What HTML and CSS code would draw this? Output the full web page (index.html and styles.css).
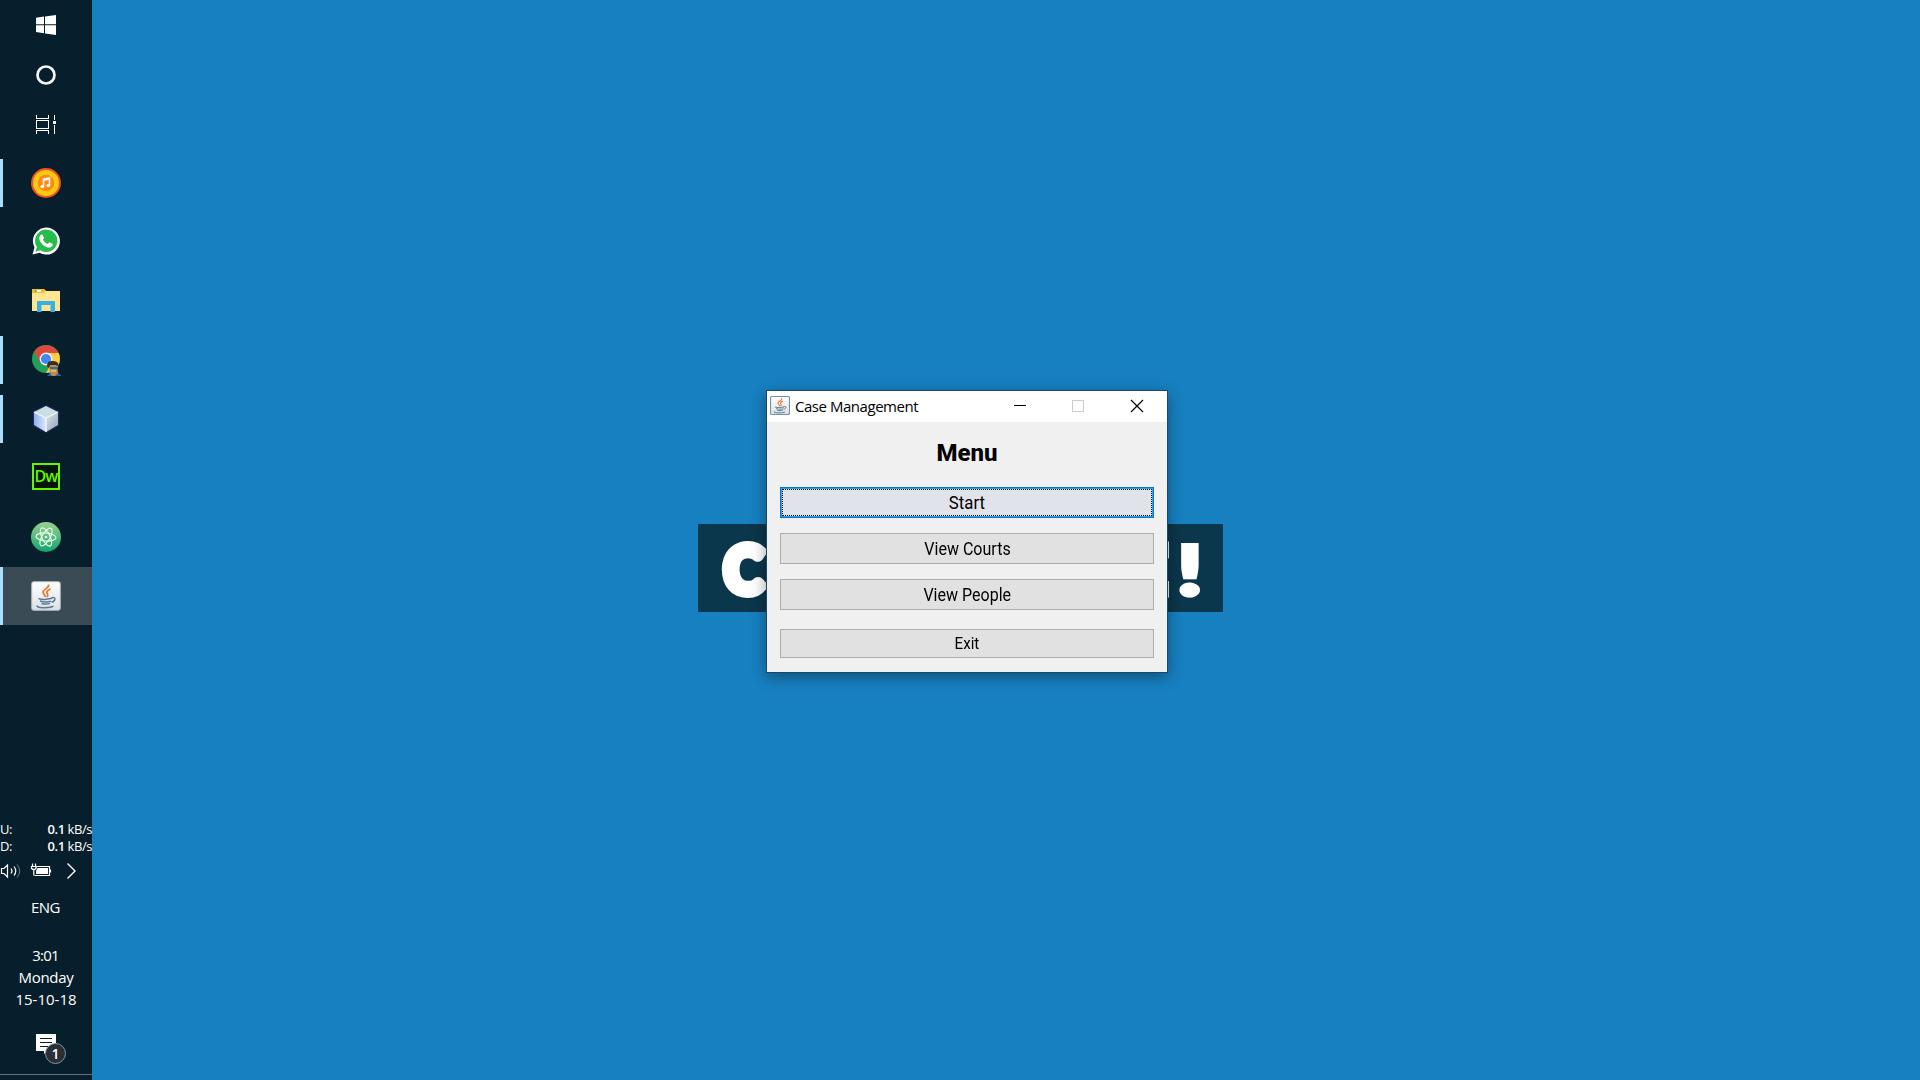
FILE: index.html
```
<!DOCTYPE html>
<html lang="en">
<head>
<meta charset="utf-8">
<title>Case Management</title>
<link rel="stylesheet" href="styles.css">
</head>
<body>
<svg class="defs" aria-hidden="true">
  <defs>
    <linearGradient id="tile" x1="0" y1="0" x2="0" y2="1"><stop offset="0" stop-color="#fff"/><stop offset="1" stop-color="#dcdfe2"/></linearGradient>
    <symbol id="java" viewBox="0 0 30 30">
      <rect x=".7" y=".7" width="28.6" height="28.6" rx="2" fill="url(#tile)" stroke="#a9bccb"/>
      <path d="M17.500 3.500c1.500 4-6 4.500-5.500 8 .4 1.500 2 2.500 2.500 4.500M19.500 8c-3.500 1.500-4.500 3-3 5 .9 1.200.3 2-.5 3" fill="none" stroke="#e8762b" stroke-width="1.700"/>
      <path d="M7.500 17.500c3 1 9 1 13.500-.2M9 20c3.500 1.100 8 1.100 11 .1M10.500 22.500c3 .8 6 .8 8.500-.1M20.500 17c4.500-2 4.500 3 0 4.300M6.500 24.500c-3 2.500 12 3 16 .7" fill="none" stroke="#587b98" stroke-width="1.500"/>
    </symbol>
  </defs>
</svg>
<div class="desktop">
  <nav class="taskbar">
    <div class="system">
      <div class="sys"><svg width="20" height="20" viewBox="0 0 20 20" fill="#fff"><path d="M0 2.700 8 1.500V9.300H0zM9 1.400 20 0V9.300H9zM0 10.300H8v7.900L0 17.100zM9 10.300H20V20L9 18.500z"/></svg></div>
      <div class="sys"><svg width="20" height="20" viewBox="0 0 20 20"><circle cx="10" cy="10" r="8.500" fill="none" stroke="#f4f6f7" stroke-width="2.700"/></svg></div>
      <div class="sys views"><svg width="20" height="19" viewBox="0 0 20 19" fill="none" stroke="#fff" shape-rendering="crispEdges"><path d="M.5 0V3.500H12.500V0M.5 5.500H12.500V13.500H.5zM.5 19V15.500H12.500V19M18.500 0V5M18.500 10V19"/><path d="M17 6H20V9H17z" fill="#fff" stroke="none"/></svg></div>
    </div>
    <div class="apps">
      <div class="app open"><svg width="30" height="30" viewBox="0 0 30 30"><circle cx="15" cy="15" r="15" fill="#f04f23"/><circle cx="15" cy="15" r="13" fill="#ffc814"/><circle cx="15" cy="15" r="8.300" fill="#f98c0b"/><path d="M12.500 18.300V11l6-1.200v7.500" fill="none" stroke="#fff" stroke-width="1.500"/><path d="M12.500 12 18.500 10.800" stroke="#fff" stroke-width="2"/><ellipse cx="11.300" cy="18.500" rx="1.900" ry="1.500" fill="#fff"/><ellipse cx="17.300" cy="17.500" rx="1.900" ry="1.500" fill="#fff"/></svg></div>
      <div class="app whatsapp"><svg width="28" height="28" viewBox="0 0 28 28"><path d="M.5 27.500 2.500 20.500A13.500 13.500 0 1 1 7.500 25.700z" fill="#fff"/><path d="M3.400 24.700 4.900 20A11.200 11.200 0 1 1 8.300 23.300z" fill="#27bd4a"/><path d="M8.500 8.200c1-1.200 2-.9 2.400 0l1 2.400c.2.700-.3 1.300-1 2.100 1 2 2.500 3.300 4.800 4.200.8-1 1.300-1.700 2-1.400l2.600 1.300c.6.300.5 1.200.1 2-.8 1.500-2.700 2.200-4.700 1.600-4-1.200-7.500-4.800-8.300-8.200-.3-1.500.2-3 1.100-4z" fill="#fff"/></svg></div>
      <div class="app folder"><svg width="28" height="23" viewBox="0 0 28 23"><path d="M0 0H12L14 2H28V22H0z" fill="#ffe491"/><path d="M0 0H12L13.500 2 12 4H0z" fill="#f3bd25"/><path d="M3 1H9V3H3z" fill="#fff5d8"/><path d="M3 1H4.500V3H3z" fill="#28a56d"/><path d="M5 23V13Q5 12 6 12H22Q23 12 23 13V23H18.500V16H9.500V23z" fill="#38b0e4"/></svg></div>
      <div class="app open"><svg width="29" height="31" viewBox="0 0 29 31"><circle cx="14" cy="14" r="14" fill="#22a05b"/><path d="M14 14 2 7A14 14 0 0 1 26.500 8z" fill="#dc4a3d"/><path d="M2 7 8 17 14 8z" fill="#dc4a3d"/><path d="M14 8H26.600A14 14 0 0 1 14 28L20 17z" fill="#fdcb46"/><circle cx="14" cy="14" r="6.400" fill="#f3f5f7"/><circle cx="14" cy="14" r="5.100" fill="#4688f1"/><path d="M16 31 18 28 17 20H25L26 28 29 31z" fill="#c28a45"/><path d="M15 21Q15 15.500 21 16 27 16 27 22L24 20 18 20 17 23z" fill="#392c25"/><path d="M18 22H25V24H18z" fill="#4263a8"/><path d="M19 26H24" stroke="#f7dfb1"/><path d="M15 31 18 28 20 31zM23 31 26 28 29 31z" fill="#3357ba"/></svg></div>
      <div class="app open"><svg class="cube" width="28" height="28" viewBox="0 0 28 28"><defs><linearGradient id="left" x1="0" x2="1"><stop offset="0" stop-color="#8fb0ef"/><stop offset="1" stop-color="#dbe8fb"/></linearGradient><linearGradient id="right" x1="0" y1="0" x2="1" y2="1"><stop offset="0" stop-color="#dfe5ec"/><stop offset="1" stop-color="#93a2b3"/></linearGradient></defs><path d="M14 1 26 7 14 13 2 7z" fill="#c9dfe2"/><path d="M2 7 14 13V27L2 20z" fill="url(#left)"/><path d="M26 7 14 13V27L26 20z" fill="url(#right)"/><path d="M2 7 14 13 26 7M14 13V27" fill="none" stroke="#f3f8ff" stroke-width="1.300"/></svg></div>
      <div class="app"><div class="dw">Dw</div></div>
      <div class="app"><svg width="30" height="30" viewBox="0 0 30 30"><defs><linearGradient id="atom" x1="0" y1="0" x2="0" y2="1"><stop offset="0" stop-color="#9ad28d"/><stop offset="1" stop-color="#12a36d"/></linearGradient></defs><circle cx="15" cy="15" r="15" fill="url(#atom)"/><g fill="none" stroke="#e9fff0" stroke-width="1.200"><ellipse cx="15" cy="15" rx="10" ry="4" transform="rotate(4 15 15)"/><ellipse cx="15" cy="15" rx="10" ry="4" transform="rotate(64 15 15)"/><ellipse cx="15" cy="15" rx="10" ry="4" transform="rotate(121 15 15)"/></g><circle cx="15" cy="15" r="1.300" fill="#fff"/></svg></div>
      <div class="app open active"><svg width="30" height="30"><use href="#java"/></svg></div>
    </div>
    <div class="tray">
      <div class="net"><span>U:</span><span><b>0.1</b> kB/s</span></div>
      <div class="net"><span>D:</span><span><b>0.1</b> kB/s</span></div>
      <div class="status"><svg width="92" height="22" viewBox="0 0 92 22" fill="none" stroke="#fff"><path d="M1.500 8.500H4L7.500 5V17L4 13.500H1.500zM11 8.500q2 2.500 0 5M14 6.500q3.500 4.500 0 9" stroke-width="1.200"/><path d="M17 4.500q5.500 6.500 0 13" stroke="#6c7b84"/><path d="M37 6.500H49.500V15.500H34.500M50.500 9.500V12.500" stroke-width="1.200"/><path d="M37.500 8H48V14H36V11z" fill="#fff" stroke="none"/><path d="M31.500 6V8.500q2.200 2 4.500 0V6M32.500 3.500V6M35.500 3.500V6M31 6.500H37M33.800 9.500V15.500" stroke-width="1.200"/><path d="M67.500 3.500 75 11 67.500 18.500" stroke-width="1.400"/></svg></div>
      <div class="lang">ENG</div>
      <div class="clock"><span class="time">3:01</span><span class="day">Monday</span><span class="date">15-10-18</span></div>
      <div class="notify"><svg width="20" height="20" viewBox="0 0 20 20"><path d="M0 0H20V17H11L8 20V17H0z" fill="#fff"/><path d="M4 4.500H16M4 8.500H16M4 12.500H12" stroke="#071f2c"/></svg><span class="badge">1</span></div>
      <div class="edge"></div>
    </div>
  </nav>
  <main class="wallpaper">
    <div class="banner"><span class="big-c">C</span><span class="big-e">E</span><span class="big-x">!</span></div>
    <section class="window">
      <header class="titlebar">
        <svg class="appicon" width="20" height="19" viewBox="0 0 30 30" preserveAspectRatio="none"><use href="#java" width="30" height="30"/><rect x=".8" y=".8" width="28.400" height="28.400" rx="2" fill="none" stroke="#7390a8" stroke-width="1.600"/></svg>
        <span class="title">Case Management</span>
        <svg class="controls" width="176" height="31" viewBox="0 0 176 31" fill="none" stroke="#000"><path d="M23 14.500H35" shape-rendering="crispEdges"/><rect x="81.500" y="9.500" width="11" height="11" stroke="#ccc"/><path d="M140 9 152 21M152 9 140 21" stroke-width="1.200"/></svg>
      </header>
      <div class="content">
        <h1>Menu</h1>
        <button class="btn focus"><span>Start</span></button>
        <button class="btn"><span>View Courts</span></button>
        <button class="btn"><span>View People</span></button>
        <button class="btn exit"><span>Exit</span></button>
      </div>
    </section>
  </main>
</div>
</body>
</html>
```
FILE: styles.css
```
* { box-sizing: border-box; }
body { margin: 0; overflow: hidden; font-family: "Open Sans", sans-serif; }
svg { display: block; flex: none; }
.defs { position: absolute; width: 0; height: 0; }
.desktop { display: flex; width: 1920px; height: 1080px; background: #1780c1; }

.taskbar { width: 92px; height: 1080px; display: flex; flex-direction: column; background: #071f2c; color: #fff; }
.sys { height: 50px; display: flex; align-items: center; justify-content: center; }
.views { padding-bottom: 1px; }
.apps { display: flex; flex-direction: column; gap: 1px; padding-top: 4px; }
.app { position: relative; height: 58px; display: flex; align-items: center; justify-content: center; }
.open::before { content: ""; position: absolute; left: 0; top: 5px; width: 3px; height: 48px; background: #a9deff; }
.whatsapp, .folder { padding-bottom: 2px; }
.active { background: #3b4b56; }
.active::before { top: 0; height: 58px; }
.cube { filter: drop-shadow(0 0 1px #4a3fc0); }
.dw { width: 28px; height: 27px; margin-bottom: 3px; border: 2px solid #62f600; background: #051504; color: #62f600; font: 600 16px/22px "Open Sans", sans-serif; text-align: center; letter-spacing: -1px; }

.tray { margin-top: auto; display: flex; flex-direction: column; height: 259px; }
.net { display: flex; justify-content: space-between; height: 17px; font-size: 13px; line-height: 17px; letter-spacing: -0.450px; white-space: nowrap; }
.net b { font-weight: 600; }
.status { height: 22px; margin-top: 5px; }
.lang { margin-top: 14px; padding-right: 1px; height: 22px; font-size: 15px; line-height: 22px; text-align: center; letter-spacing: -0.5px; }
.clock { margin-top: 26px; display: flex; flex-direction: column; align-items: center; font-size: 15px; line-height: 22px; }
.time { padding-right: 1px; letter-spacing: -0.8px; }
.day { letter-spacing: -0.3px; }
.notify { position: relative; margin: 24px 0 0 36px; width: 20px; height: 20px; }
.badge { position: absolute; left: 9px; top: 9px; width: 21px; height: 21px; border: 1px solid #8c959a; border-radius: 50%; background: #292f35; font-size: 14px; font-weight: 600; line-height: 19px; text-align: center; }
.edge { margin-top: auto; margin-bottom: 5px; height: 1px; background: #62717a; }

.wallpaper { position: relative; flex: 1; }
.banner { position: absolute; left: 606px; top: 524px; width: 525px; height: 88px; background: #0b374c; color: #fff; font: 900 64px/90px Lato, sans-serif; -webkit-text-stroke: 9px #fff; }
.banner span { position: absolute; top: 0; }
.big-c { left: 26px; transform: scaleX(.94); transform-origin: 0 50%; }
.big-e { left: 432px; }
.big-x { left: 482px; font-size: 69px; -webkit-text-stroke-width: 4px; transform: scaleX(1.350); }

.window { position: absolute; left: 674px; top: 390px; width: 402px; height: 283px; border: 1px solid #174a68; background: #f0f0f0; color: #000; box-shadow: 0 4px 14px rgba(0, 0, 0, .38); }
.titlebar { height: 31px; display: flex; align-items: center; padding-left: 3px; background: #fff; }
.appicon { margin-bottom: 3px; }
.title { margin: 0 0 2px 5px; font-size: 15px; letter-spacing: -0.460px; white-space: nowrap; }
.controls { margin-left: auto; }
.content { display: flex; flex-direction: column; padding: 0 13px; }
h1 { margin: 0; height: 65px; font: 800 24px/62px Roboto, sans-serif; text-align: center; }
.btn span { display: inline-block; transform: scaleX(.89); }
.btn { height: 31px; margin: 0 0 15px; padding: 0; border: 1px solid #adadad; border-radius: 0; background: #e1e1e1; color: #000; font: 18px/27px Roboto, sans-serif; }
.btn.focus { position: relative; border: 1px solid #0078d7; box-shadow: inset 0 0 0 1px #3a9be8; background: #e0e4ea; }
.btn.focus span { transform: translateX(-.5px) scaleX(.93); }
.focus::after { content: ""; position: absolute; inset: 1px; border: 1px dotted #000; }
.btn.exit { height: 29px; margin-top: 4px; font-size: 17px; }
```
